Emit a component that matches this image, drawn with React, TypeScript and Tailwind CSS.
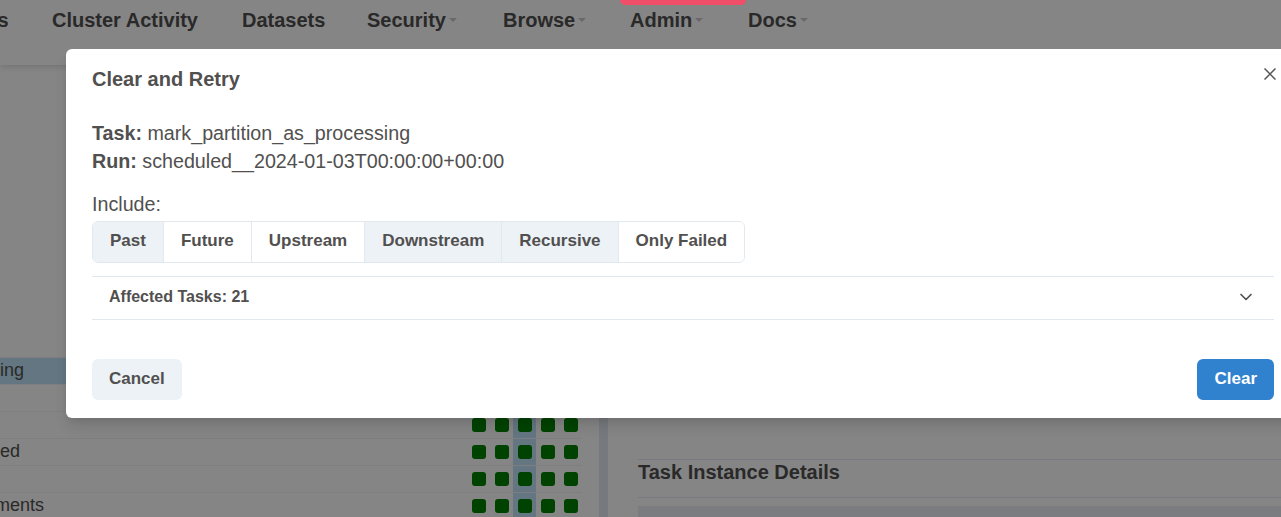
import React from 'react';
import { ChevronDown } from 'lucide-react';

const FONT = { fontFamily: '"Liberation Sans", Arial, sans-serif' };

// each nav item box runs from its own left edge to the next item's left edge
const navItems = [
  { label: 'DAGs', caret: false, w: 'w-[99px]' },
  { label: 'Cluster Activity', caret: false, w: 'w-[190px]' },
  { label: 'Datasets', caret: false, w: 'w-[125px]' },
  { label: 'Security', caret: true, w: 'w-[136px]' },
  { label: 'Browse', caret: true, w: 'w-[127px]' },
  { label: 'Admin', caret: true, w: 'w-[118px]' },
  { label: 'Docs', caret: true, w: 'w-auto' },
];

const gridRows = [
  { name: '', offset: 0, active: false },
  { name: 'ing', offset: 0, active: true },
  { name: '', offset: 0, active: false },
  { name: '', offset: 0, active: false },
  { name: 'ed', offset: 0, active: false },
  { name: '', offset: 0, active: false },
  { name: 'ments', offset: -5, active: false },
];

const includeOptions = [
  { label: 'Past', on: true },
  { label: 'Future', on: false },
  { label: 'Upstream', on: false },
  { label: 'Downstream', on: true },
  { label: 'Recursive', on: true },
  { label: 'Only Failed', on: false },
];

const GridRow: React.FC<{ name: string; offset: number; active: boolean }> = ({ name, offset, active }) => (
  <div
    className={`flex h-[27px] w-[582px] shrink-0 items-stretch border-b border-[#edf2f7] ${active ? 'bg-[#bee3f8]' : ''}`}
  >
    <div className="flex flex-1 items-center overflow-hidden whitespace-nowrap pb-[2px] text-[18px] text-[#51504f]">
      <span style={{ marginLeft: offset }}>{name}</span>
    </div>
    {[0, 1, 2, 3, 4].map((c) => (
      <div
        key={c}
        className={`flex w-[23px] items-center justify-center ${c === 2 && !active ? 'bg-[#bee3f8]' : ''}`}
      >
        <div className="h-[14px] w-[14px] rounded-[3px] bg-[#008000]" />
      </div>
    ))}
  </div>
);

export default function App() {
  return (
    <div className="relative h-[517px] w-full overflow-hidden bg-white" style={FONT}>
      {/* page behind the dialog */}
      <nav className="relative z-10 h-[65px] bg-white shadow-[0_2px_6px_rgba(0,0,0,0.14)]">
        <div className="ml-[-47px] flex">
          {navItems.map((item) => (
            <div
              key={item.label}
              className={`flex h-10 shrink-0 items-center whitespace-nowrap text-[20px] font-bold leading-10 text-[#51504f] ${item.w}`}
            >
              {item.label}
              {item.caret && (
                <span className="ml-[3px] inline-block h-0 w-0 border-x-[4px] border-t-[4px] border-x-transparent border-t-[#cdc6d0]" />
              )}
            </div>
          ))}
        </div>
      </nav>

      <div className="flex h-[452px]">
        <div className="flex w-[599px] flex-col">
          <div className="h-[266px] shrink-0" />
          {gridRows.map((r, i) => (
            <GridRow key={i} {...r} />
          ))}
        </div>
        <div className="w-[9px] bg-[#e2e8f0]" />
        <div className="flex flex-1 flex-col pl-[30px]">
          <div className="h-[394px] shrink-0" />
          <div className="h-[39px] shrink-0 border-y border-[#e2e8f0] text-[20px] font-bold leading-[24px] text-[#51504f]">
            Task Instance Details
          </div>
          <div className="mt-[8px] h-[40px] shrink-0 bg-[#eceef6]" />
        </div>
      </div>

      {/* overlay */}
      <div className="absolute inset-0 z-20 bg-[rgba(0,0,0,0.48)]" />

      {/* toast peeking in at the top */}
      <div className="absolute left-[620px] top-0 z-30 h-[5px] w-[126px] rounded-b-md bg-[#f14e69]" />

      {/* dialog */}
      <div className="absolute left-[66px] top-[49px] z-30 w-[1234px] rounded-md bg-white px-[26px] pb-[18px] pt-[15px] text-[#51504f] shadow-[0_10px_15px_-3px_rgba(0,0,0,0.12),0_4px_6px_-2px_rgba(0,0,0,0.06)]">
        <button className="absolute right-[24px] top-[19px] flex h-[12px] w-[12px] items-center justify-center">
          <svg width="12" height="12" viewBox="0 0 12 12">
            <path d="M0.5 0.5 L11.5 11.5 M11.5 0.5 L0.5 11.5" stroke="#555" strokeWidth="1.5" />
          </svg>
        </button>

        <h2 className="text-[20px] font-bold leading-[30px]">Clear and Retry</h2>

        <div className="mt-[25px] text-[19.7px] leading-[28px]">
          <div>
            <span className="font-bold">Task:</span> mark_partition_as_processing
          </div>
          <div>
            <span className="font-bold">Run:</span> scheduled__2024-01-03T00:00:00+00:00
          </div>
          <div className="mt-[15px]">Include:</div>
        </div>

        <div className="mt-[3px] flex h-[42px] w-fit overflow-hidden rounded-md border border-[#e2e8f0]">
          {includeOptions.map((o, i) => (
            <button
              key={o.label}
              className={`px-[17px] pb-[2px] text-[17px] font-bold ${i > 0 ? 'border-l border-[#e2e8f0]' : ''} ${
                o.on ? 'bg-[#edf2f7]' : 'bg-white'
              }`}
            >
              {o.label}
            </button>
          ))}
        </div>

        <div className="mt-[13px] flex h-[44px] items-center justify-between border-y border-[#e2e8f0] pb-[2px] pl-[17px] pr-[18px]">
          <span className="text-[16px] font-bold">Affected Tasks: 21</span>
          <ChevronDown size={20} strokeWidth={2} />
        </div>

        <div className="mt-[39px] flex justify-between">
          <button className="h-[41px] rounded-md bg-[#edf2f7] px-[17px] pb-[2px] text-[17px] font-bold">Cancel</button>
          <button className="h-[41px] rounded-md bg-[#3182ce] px-[17px] pb-[2px] text-[17px] font-bold text-white">Clear</button>
        </div>
      </div>
    </div>
  );
}
